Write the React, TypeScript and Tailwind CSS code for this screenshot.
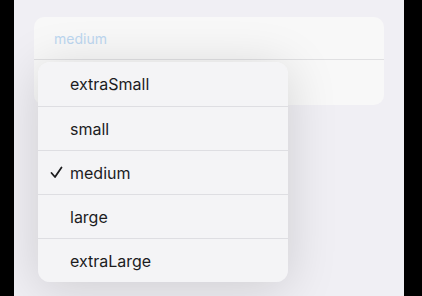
import React from "react";

const items = ["extraSmall", "small", "medium", "large", "extraLarge"];

export default function App() {
  return (
    <div className="w-[422px] h-[296px] bg-black flex" style={{ fontFamily: "Inter, 'Noto Sans', sans-serif" }}>
      <div className="ml-[14px] w-[390px] h-full bg-[#f0eff4] relative overflow-hidden">
        <div className="mt-[17px] ml-[20px] w-[350px] h-[88px] rounded-[10px] bg-[#f8f8f8] flex flex-col">
          <div className="h-[43px] pl-[20px] flex items-center text-[14px] text-[#bdd7f0] border-b border-[#e0e0e2]">
            medium
          </div>
          <div className="flex-1" />
        </div>
        <div className="absolute left-[24px] top-[62px] w-[250px] rounded-[12px] bg-[#f3f3f6]/95 shadow-[0_6px_50px_rgba(0,0,0,0.15)] flex flex-col overflow-hidden">
          {items.map((t, i) => (
            <div key={t} className={`h-[44px] flex items-center relative ${i > 0 ? "border-t border-[#dedee2]" : ""}`}>
              {t === "medium" && (
                <svg className="absolute left-[12px]" width="13" height="13" viewBox="0 0 13 13">
                  <path d="M1.5 7 L5 11 L11.5 1.5" fill="none" stroke="#1c1c1e" strokeWidth="1.8" strokeLinecap="round" strokeLinejoin="round" />
                </svg>
              )}
              <span className="ml-[32px] text-[16px] text-[#1c1c1e]">{t}</span>
            </div>
          ))}
        </div>
      </div>
      <div className="flex-1 bg-black" />
    </div>
  );
}
